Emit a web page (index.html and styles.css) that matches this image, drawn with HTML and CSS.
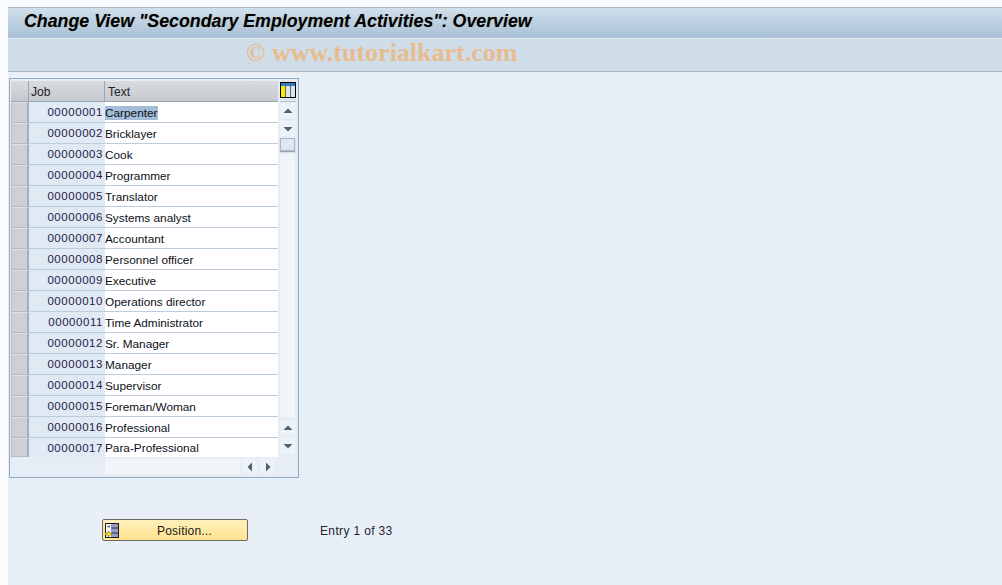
FILE: index.html
```html
<!DOCTYPE html>
<html lang="en">
<head>
<meta charset="utf-8">
<title>Change View</title>
<link rel="stylesheet" href="styles.css">
</head>
<body>
<div class="screen">
  <header class="titlebar"><h1>Change View "Secondary Employment Activities": Overview</h1></header>
  <div class="toolbar"><span class="watermark">© www.tutorialkart.com</span></div>
  <main class="content">
    <section class="tablebox">
      <div class="tablemain">
        <div class="headrow">
          <div class="corner"></div>
          <div class="hcell hjob">Job</div>
          <div class="hcell htext">Text</div>
        </div>
        <div class="rows">
          <div class="row"><div class="sel"></div><div class="job">00000001</div><div class="txt"><span class="hl">Carpenter</span></div></div>
          <div class="row"><div class="sel"></div><div class="job">00000002</div><div class="txt">Bricklayer</div></div>
          <div class="row"><div class="sel"></div><div class="job">00000003</div><div class="txt">Cook</div></div>
          <div class="row"><div class="sel"></div><div class="job">00000004</div><div class="txt">Programmer</div></div>
          <div class="row"><div class="sel"></div><div class="job">00000005</div><div class="txt">Translator</div></div>
          <div class="row"><div class="sel"></div><div class="job">00000006</div><div class="txt">Systems analyst</div></div>
          <div class="row"><div class="sel"></div><div class="job">00000007</div><div class="txt">Accountant</div></div>
          <div class="row"><div class="sel"></div><div class="job">00000008</div><div class="txt">Personnel officer</div></div>
          <div class="row"><div class="sel"></div><div class="job">00000009</div><div class="txt">Executive</div></div>
          <div class="row"><div class="sel"></div><div class="job">00000010</div><div class="txt">Operations director</div></div>
          <div class="row"><div class="sel"></div><div class="job">00000011</div><div class="txt">Time Administrator</div></div>
          <div class="row"><div class="sel"></div><div class="job">00000012</div><div class="txt">Sr. Manager</div></div>
          <div class="row"><div class="sel"></div><div class="job">00000013</div><div class="txt">Manager</div></div>
          <div class="row"><div class="sel"></div><div class="job">00000014</div><div class="txt">Supervisor</div></div>
          <div class="row"><div class="sel"></div><div class="job">00000015</div><div class="txt">Foreman/Woman</div></div>
          <div class="row"><div class="sel"></div><div class="job">00000016</div><div class="txt">Professional</div></div>
          <div class="row last"><div class="sel"></div><div class="job">00000017</div><div class="txt">Para-Professional</div></div>
        </div>
        <div class="hscroll">
          <div class="htrack"></div>
          <div class="sbtn"><svg width="6" height="10" viewBox="0 0 6 10"><path d="M5 0.5V9.5L0.5 5Z"/></svg></div>
          <div class="sbtn"><svg width="6" height="10" viewBox="0 0 6 10"><path d="M1 0.5V9.5L5.5 5Z"/></svg></div>
        </div>
      </div>
      <div class="side">
        <div class="config">
          <svg width="16" height="16" viewBox="0 0 16 16">
            <rect x="0.5" y="0.5" width="15" height="15" fill="#fff" stroke="#000"/>
            <rect x="1" y="1" width="14" height="3" fill="#2f7fc4"/>
            <rect x="1" y="4" width="4" height="11" fill="#ffe600"/>
            <rect x="6" y="4" width="4" height="11" fill="#dfe3e8"/>
            <rect x="11" y="4" width="4" height="11" fill="#dfe3e8"/>
            <path d="M5.5 1V15M10.5 1V15" stroke="#5a6b7a"/>
          </svg>
        </div>
        <div class="vscroll">
          <div class="sbtn tall"><svg width="10" height="6" viewBox="0 0 10 6"><path d="M0.5 5H9.5L5 0.5Z"/></svg></div>
          <div class="sbtn tall"><svg width="10" height="6" viewBox="0 0 10 6"><path d="M0.5 1H9.5L5 5.5Z"/></svg></div>
          <div class="thumb"></div>
          <div class="vtrack"></div>
          <div class="sbtn tall"><svg width="10" height="6" viewBox="0 0 10 6"><path d="M0.5 5H9.5L5 0.5Z"/></svg></div>
          <div class="sbtn tall"><svg width="10" height="6" viewBox="0 0 10 6"><path d="M0.5 1H9.5L5 5.5Z"/></svg></div>
        </div>
      </div>
    </section>
    <div class="actions">
      <button class="posbtn" type="button">
        <svg class="posicon" width="14" height="15" viewBox="0 0 14 15">
          <rect x="0.5" y="0.5" width="13" height="14" fill="#fff" stroke="#1a1a1a"/>
          <rect x="6" y="1" width="7" height="13" fill="#9a9ac8"/>
          <path d="M6.5 5H13M6.5 10H13" stroke="#22304a"/>
          <path d="M2 3.5H5M3.5 2L5 3.5L3.5 5" fill="none" stroke="#6a7a8a"/>
          <path d="M0 10H3V8L7 11L3 14V12H0Z" fill="#ffdf20" stroke="#5a4a00" stroke-width="0.5"/>
        </svg>
        <span class="poslabel">Position...</span>
      </button>
      <span class="entry">Entry 1 of 33</span>
    </div>
  </main>
</div>
</body>
</html>
```
FILE: styles.css
```css
* { box-sizing: border-box; }
html, body { margin: 0; padding: 0; }
body {
  width: 1002px;
  height: 585px;
  overflow: hidden;
  background: #fafbfe;
  font-family: "Liberation Sans", Arial, sans-serif;
  font-size: 12px;
  color: #000;
}
.screen {
  height: 585px;
  padding: 7px 0 0 8px;
  display: flex;
  flex-direction: column;
}
.titlebar {
  height: 31px;
  border-top: 1px solid #aab6c3;
  background: linear-gradient(#d0dfec, #a9c0d6);
  padding: 0 0 3px 16px;
  display: flex;
  align-items: center;
}
.titlebar h1 {
  margin: 0;
  font-size: 17.8px;
  font-style: italic;
  font-weight: bold;
  color: #000;
  white-space: nowrap;
  text-shadow: 0 0 1px rgba(120, 90, 30, 0.35);
}
.toolbar {
  height: 34px;
  background: #cfdde9;
  border-top: 1px solid #e4ecf3;
  border-bottom: 1px solid #a3b6c9;
  padding: 0 0 5px 238px;
  display: flex;
  align-items: center;
}
.watermark {
  font-family: "Liberation Serif", "Times New Roman", serif;
  font-size: 26px;
  font-weight: bold;
  color: #e8bc8c;
  white-space: nowrap;
}
.content {
  flex: 1;
  background: #e8eff7;
  padding: 6px 0 0 1px;
}
.tablebox {
  width: 290px;
  height: 400px;
  border: 1px solid #8eacc6;
  background: #e6edf5;
  padding: 2px 2px 0 1px;
  display: flex;
}
.tablemain { width: 267px; }
.headrow { display: flex; height: 21px; }
.corner {
  width: 18px;
  background: linear-gradient(#d8dbdf, #c4c8cd);
  border-right: 1px solid #9aa8b5;
  border-bottom: 1px solid #9aa8b5;
}
.hcell {
  background: linear-gradient(#d8dbdf, #c6cacf);
  border-bottom: 1px solid #9aa8b5;
  line-height: 22px;
  color: #222;
  white-space: nowrap;
}
.hjob { width: 76px; padding-left: 2px; border-right: 1px solid #9aa8b5; }
.htext { width: 173px; padding-left: 3px; }
.row { display: flex; height: 21px; }
.sel {
  width: 18px;
  background: #cdd0d5;
  border: 1px solid #b4bcc5;
  border-right: 2px solid #a5aeb8;
  border-top-color: #dde1e6;
}
.job {
  width: 76px;
  background: #dfeaf4;
  border-bottom: 1px solid #bdccda;
  text-align: right;
  padding-right: 2px;
  line-height: 21px;
  color: #2a1a4a;
  letter-spacing: 0.55px;
  font-size: 11.5px;
  white-space: nowrap;
}
.txt {
  width: 173px;
  background: #fff;
  border-bottom: 1px solid #bdccda;
  line-height: 22px;
  font-size: 11.8px;
  color: #0a1018;
  white-space: nowrap;
  overflow: hidden;
}
.last { height: 19px; }
.last .sel { height: 19px; }
.last .job, .last .txt { border-bottom: 0; height: 19px; line-height: 20px; }
.hl { background: #a3bcd7; display: inline-block; line-height: 14px; padding-right: 1px; }
.hscroll {
  display: flex;
  padding-left: 94px;
  height: 17px;
  margin-top: 2px;
}
.htrack { width: 136px; height: 15px; background: #f2f6fa; margin-right: 2px; }
.sbtn {
  width: 15px;
  height: 15px;
  margin-right: 3px;
  background: #edf2f8;
  display: flex;
  align-items: center;
  justify-content: center;
}
.sbtn path { fill: #4f6274; }
.side { width: 18px; margin-left: 2px; }
.config {
  height: 21px;
  padding-top: 1px;
  display: flex;
  justify-content: flex-start;
  background: #e0e6ec;
  border-bottom: 1px solid #b8c2cc;
}
.vscroll {
  padding-top: 1px;
  display: flex;
  flex-direction: column;
  align-items: flex-start;
  height: 354px;
}
.tall { width: 15px; height: 15px; margin: 0 0 3px 0; }
.thumb {
  width: 15px;
  height: 13px;
  margin-top: -1px;
  border: 1px solid #a9b6c3;
  background: #dfe8f2;
  box-shadow: 0 1px 1px #9aa6b2;
}
.vtrack { flex: 1; width: 15px; background: #f1f5f9; margin: 3px 0 3px; }
.actions {
  margin: 41px 0 0 93px;
  display: flex;
  align-items: center;
}
.posbtn {
  width: 146px;
  height: 22px;
  padding: 0 0 0 2px;
  border: 1px solid #6c6c64;
  border-radius: 2px;
  background: linear-gradient(#fff0bc, #ffe38f);
  display: flex;
  align-items: center;
  font: inherit;
  color: #1a1a1a;
}
.posicon { flex: none; }
.poslabel { margin-left: 38px; padding-top: 2px; letter-spacing: 0.2px; }
.entry { margin-left: 72px; padding-top: 2px; color: #1a2530; letter-spacing: 0.35px; }
```
